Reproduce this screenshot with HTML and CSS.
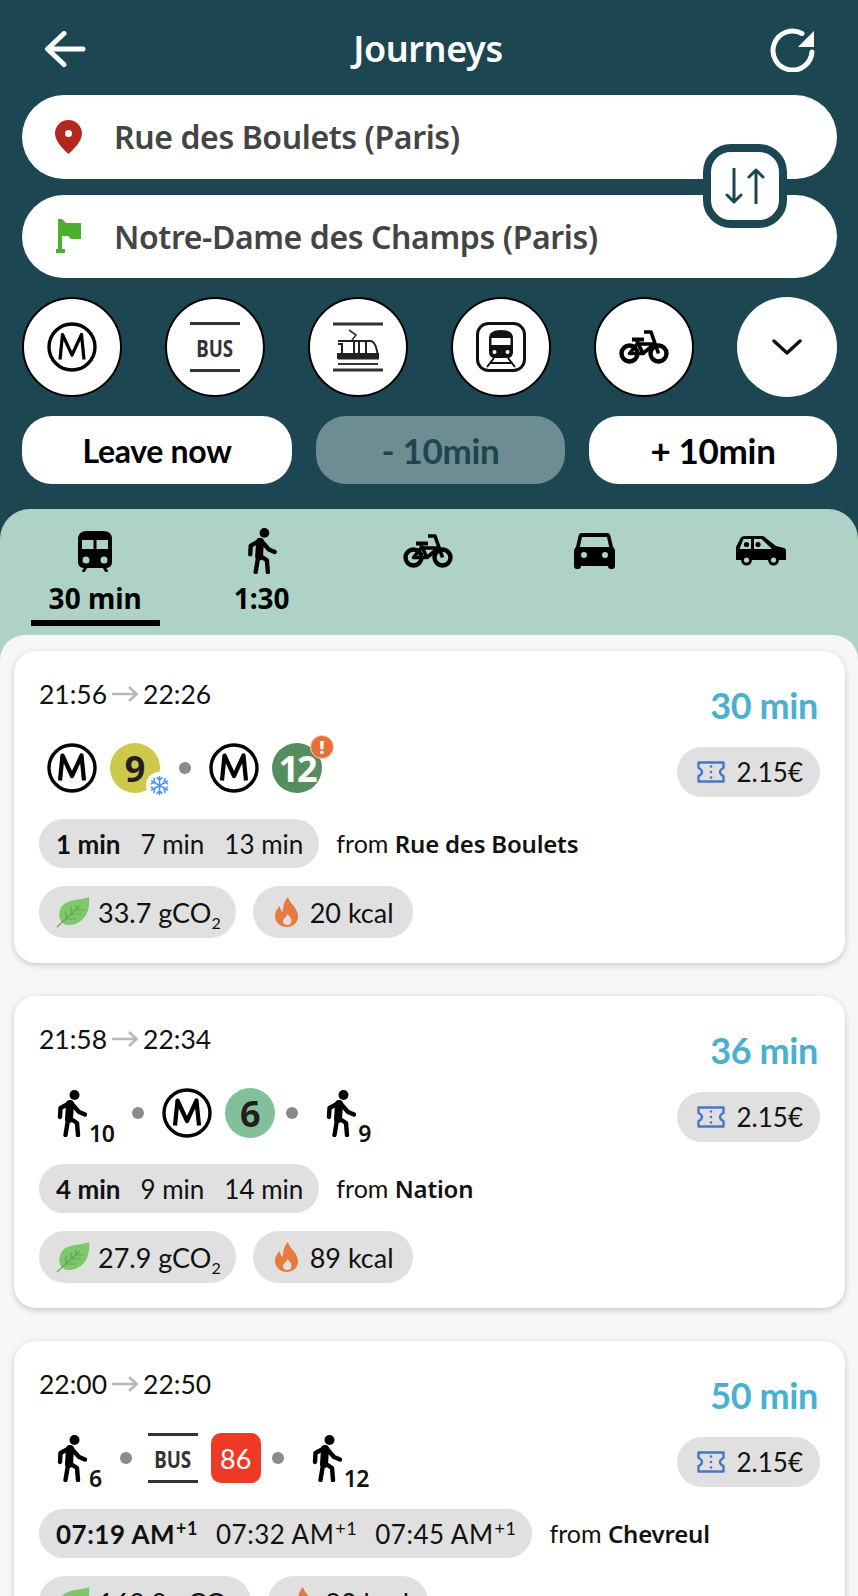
FILE: index.html
```html
<!DOCTYPE html>
<html lang="en">
<head>
  <meta charset="UTF-8" />
  <title>Journeys</title>
  <link rel="stylesheet" href="styles.css">
</head>
<body>

<svg class="icon-defs" xmlns="http://www.w3.org/2000/svg">
  <symbol id="i-metro" viewBox="0 0 50 50">
    <circle cx="25" cy="25" r="23" fill="none" stroke="#000" stroke-width="3.4"/>
    <path d="M13 37.5 15.5 12.5 25 33 34.5 12.5 37 37.5" fill="none" stroke="#000" stroke-linejoin="round"/>
  </symbol>
  <symbol id="i-tram" viewBox="0 0 50 50">
    <path d="M0 2H50M0 48H50" stroke="#333" stroke-width="3" fill="none"/>
    <path d="M16 8 23 13 19 18" stroke="#333" stroke-width="1.6" fill="none"/>
    <path d="M5 19H37C41 19 44 25 45 36H5V32H9V22H5" fill="none" stroke="#222" stroke-width="2"/>
    <path d="M5 31H46V37.5H5Z" fill="#222"/>
    <path d="M21 19V37M26 19V37M33 19V37" stroke="#222" stroke-width="2" fill="none"/>
    <path d="M5 42H45" stroke="#333" stroke-width="2" fill="none"/>
  </symbol>
  <symbol id="i-rail" viewBox="0 0 50 50">
    <rect x="1.5" y="1.5" width="47" height="47" rx="11" fill="none" stroke="#111" stroke-width="3"/>
    <path d="M25 8C17 8 13 11 13 16V30C13 33 15 36 18 36H32C35 36 37 33 37 30V16C37 11 33 8 25 8Z" fill="#111"/>
    <path d="M15.5 16H34.5V23H15.5Z" fill="#fff"/>
    <circle cx="18.5" cy="30" r="2" fill="#fff"/>
    <circle cx="31.5" cy="30" r="2" fill="#fff"/>
    <path d="M18 36 11 45M32 36 39 45M15 41H35" stroke="#111" stroke-width="2" fill="none"/>
  </symbol>
  <symbol id="i-bike" viewBox="0 0 50 34">
    <circle cx="10.5" cy="23.5" r="8" fill="none" stroke="#000" stroke-width="4.4"/>
    <circle cx="39.5" cy="23.5" r="8" fill="none" stroke="#000" stroke-width="4.4"/>
    <path d="M10.5 23.5H24L35.5 14H18ZM17.5 10 24 23.5M39.5 23.5 32 2H25" fill="none" stroke="#000" stroke-width="3.6" stroke-linejoin="round"/>
    <path d="M13 9.5H25" stroke="#000" stroke-width="4" fill="none"/>
  </symbol>
  <symbol id="i-train" viewBox="0 0 34 41">
    <path fill-rule="evenodd" d="M9 0H25C31 0 34 3 34 8V31C34 34 32 37 28 37H6C2 37 0 34 0 31V8C0 3 3 0 9 0ZM4 9V18H15.5V9ZM18.5 9V18H30V9ZM8 25.5A3.5 3.5 0 1 0 8 32.5 3.5 3.5 0 1 0 8 25.5ZM26 25.5A3.5 3.5 0 1 0 26 32.5 3.5 3.5 0 1 0 26 25.5Z"/>
    <path d="M8 36 5 41M26 36 29 41" stroke="#000" stroke-width="3" fill="none"/>
  </symbol>
  <symbol id="i-walk" viewBox="0 0 30 47">
    <circle cx="17.5" cy="5" r="5"/>
    <path d="M13 14 12 29" stroke="#000" stroke-width="8" stroke-linecap="round" fill="none"/>
    <path d="M11 14 3.5 18 3 27M15 14 22 22 28 24.5M11 30 8.5 45M14 29 20 33 21 45" stroke="#000" stroke-width="4.4" stroke-linecap="round" stroke-linejoin="round" fill="none"/>
  </symbol>
  <symbol id="i-car" viewBox="0 0 41 36">
    <path fill-rule="evenodd" d="M8 0H33C35 0 36 1 36.5 3L39 14C40 15 41 16 41 18V33C41 35 40 36 38 36H37C35 36 34 35 34 33H7C7 35 6 36 4 36H3C1 36 0 35 0 33V18C0 16 1 15 2 14L4.5 3C5 1 6 0 8 0ZM8 4 5.8 14H35.2L33 4ZM10 19A3 3 0 1 0 10 25 3 3 0 1 0 10 19ZM31 19A3 3 0 1 0 31 25 3 3 0 1 0 31 19Z"/>
  </symbol>
  <symbol id="i-carpool" viewBox="0 0 50 30">
    <path d="M9 0H26C28 0 29 1 31 3L40 10 48 12C49.5 12.5 50 13.5 50 15V24H0V11L4 3C5 1 6.5 0 9 0Z"/>
    <path d="M7.5 3H15V13H3.5ZM18 3H25.5L36 13H18Z" fill="#aed3c6"/>
    <circle cx="10.5" cy="8.5" r="2.6"/>
    <circle cx="22" cy="8.5" r="2.6"/>
    <circle cx="10.5" cy="24" r="5.5" fill="#000"/>
    <circle cx="37.5" cy="24" r="5.5" fill="#000"/>
    <circle cx="10.5" cy="24" r="2.6" fill="#aed3c6"/>
    <circle cx="37.5" cy="24" r="2.6" fill="#aed3c6"/>
  </symbol>
  <symbol id="i-leaf" viewBox="0 0 34 32">
    <path d="M33 1C35 18 25 30 11 29 2 27 1 15 7 9 13 3 26 4 33 1Z" fill="#7ec76b"/>
    <path d="M1 31 24 10M10 23V15M15 18V11M20 14V9M10 23H20M15 18H25M20 14H28" stroke="#62a853" stroke-width="1.2" fill="none"/>
  </symbol>
  <symbol id="i-flame" viewBox="0 0 24 30">
    <path fill-rule="evenodd" fill="#e57b40" d="M13 0C14 6 22 10 23 18 24 25 18 30 12 30 5 30 0 25 0 19 0 14 3 11 5 9 5 12 6 14 8 15 8 9 9 4 13 0ZM12.5 17C12 20 8 21 8 24.5 8 27 10 28 12 28 15 28 16.5 26 16.5 23.5 16.5 21 14 19 12.5 17Z"/>
  </symbol>
  <symbol id="i-ticket" viewBox="0 0 28 22">
    <path d="M1.5 1.5H26.5V7C24 8 23 9.5 23 11S24 14 26.5 15V20.5H1.5V15C4 14 5 12.5 5 11S4 8 1.5 7Z" fill="none" stroke="#4a74c9" stroke-width="2.4" stroke-linejoin="round"/>
    <circle cx="14" cy="5.5" r="1.3" fill="#4a74c9"/>
    <circle cx="14" cy="11" r="1.3" fill="#4a74c9"/>
    <circle cx="14" cy="16.5" r="1.3" fill="#4a74c9"/>
  </symbol>
  <symbol id="i-snow" viewBox="0 0 22 22">
    <path d="M11 1V21M2.3 6 19.7 16M2.3 16 19.7 6M8 2.5 11 5.5 14 2.5M8 19.5 11 16.5 14 19.5M2 9.5 6 7 5 3M20 9.5 16 7 17 3M2 12.5 6 15 5 19M20 12.5 16 15 17 19" fill="none" stroke="#4a94f2" stroke-width="1.6"/>
  </symbol>
  <symbol id="i-arrow" viewBox="0 0 26 16">
    <path d="M0 8H24M17 1 24.5 8 17 15" fill="none" stroke="#b8b8b8" stroke-width="2.6"/>
  </symbol>
</svg>

<div class="app">
  <header class="header">
    <div class="topbar">
      <svg class="back-icon" viewBox="0 0 42 36"><path d="M39 18H4M20 2.5 3.5 18 20 33.5" fill="none" stroke="#fff" stroke-width="5" stroke-linecap="round" stroke-linejoin="round"/></svg>
      <h1 class="title">Journeys</h1>
      <svg class="refresh-icon" viewBox="0 0 46 46"><path d="M32 7.5A19.5 19.5 0 1 0 42 26" fill="none" stroke="#fff" stroke-width="5" stroke-linecap="round"/><path d="M44 5V21H28Z" fill="#fff"/></svg>
    </div>

    <div class="fields">
      <div class="field">
        <svg class="field-icon" viewBox="0 0 27 34"><path fill-rule="evenodd" fill="#b3281e" d="M13.5 0C21 0 27 6 27 13.5 27 21 19 29 13.5 34 8 29 0 21 0 13.5 0 6 6 0 13.5 0ZM13.5 10A3.5 3.5 0 1 0 13.5 17 3.5 3.5 0 1 0 13.5 10Z"/></svg>
        <span>Rue des Boulets (Paris)</span>
      </div>
      <div class="field">
        <svg class="field-icon" viewBox="0 0 27 34"><path fill="#4caf2f" d="M3 0H7L11 4H26V20H16L13 17H7V30H10V34H1V30H3Z"/></svg>
        <span>Notre-Dame des Champs (Paris)</span>
      </div>
      <div class="swap">
        <svg viewBox="0 0 40 36"><path d="M9 1V34M2 27 9 34 16 27M31 35V2M24 9 31 2 38 9" fill="none" stroke="#1c4651" stroke-width="3" stroke-linecap="round" stroke-linejoin="round"/></svg>
      </div>
    </div>

    <div class="modes">
      <div class="mode"><svg class="mode-metro"><use href="#i-metro"/></svg></div>
      <div class="mode"><div class="bus-mark"><span>BUS</span></div></div>
      <div class="mode"><svg class="mode-icon"><use href="#i-tram"/></svg></div>
      <div class="mode"><svg class="mode-icon"><use href="#i-rail"/></svg></div>
      <div class="mode"><svg class="mode-bike"><use href="#i-bike"/></svg></div>
      <div class="mode mode-more">
        <svg class="chevron" viewBox="0 0 30 16"><path d="M2 2 15 14 28 2" fill="none" stroke="#111" stroke-width="3.4" stroke-linecap="round" stroke-linejoin="round"/></svg>
      </div>
    </div>

    <div class="time-btns">
      <button class="time-btn">Leave now</button>
      <button class="time-btn is-step is-disabled">- 10min</button>
      <button class="time-btn is-step">+ 10min</button>
    </div>
  </header>

  <section class="sheet">
    <nav class="tabs">
      <div class="tab">
        <div class="tab-icon"><svg class="ic-train"><use href="#i-train"/></svg></div>
        <div class="tab-label">30 min</div>
        <div class="tab-line"></div>
      </div>
      <div class="tab">
        <div class="tab-icon"><svg class="ic-walk"><use href="#i-walk"/></svg></div>
        <div class="tab-label">1:30</div>
      </div>
      <div class="tab">
        <div class="tab-icon"><svg class="ic-bike"><use href="#i-bike"/></svg></div>
      </div>
      <div class="tab">
        <div class="tab-icon"><svg class="ic-car"><use href="#i-car"/></svg></div>
      </div>
      <div class="tab">
        <div class="tab-icon"><svg class="ic-carpool"><use href="#i-carpool"/></svg></div>
      </div>
    </nav>

    <div class="list">
      <article class="card">
        <div class="card-top">
          <div>
            <div class="times">21:56<svg class="time-arrow"><use href="#i-arrow"/></svg>22:26</div>
            <div class="legs">
              <svg class="leg-metro"><use href="#i-metro"/></svg>
              <div class="line line-9">9
                <span class="snow-badge"><svg><use href="#i-snow"/></svg></span>
              </div>
              <span class="dot"></span>
              <svg class="leg-metro"><use href="#i-metro"/></svg>
              <div class="line line-12">12
                <span class="alert-badge">!</span>
              </div>
            </div>
          </div>
          <div class="card-side">
            <div class="duration">30 min</div>
            <div class="pill price"><svg class="ic-ticket"><use href="#i-ticket"/></svg>2.15€</div>
          </div>
        </div>
        <div class="next-row">
          <div class="pill departures"><b>1 min</b><span>7 min</span><span>13 min</span></div>
          <div class="from">from <b>Rue des Boulets</b></div>
        </div>
        <div class="eco-row">
          <div class="pill eco"><svg class="ic-leaf"><use href="#i-leaf"/></svg><span>33.7 gCO<sub>2</sub></span></div>
          <div class="pill burn"><svg class="ic-flame"><use href="#i-flame"/></svg><span>20 kcal</span></div>
        </div>
      </article>

      <article class="card">
        <div class="card-top">
          <div>
            <div class="times">21:58<svg class="time-arrow"><use href="#i-arrow"/></svg>22:34</div>
            <div class="legs">
              <div class="walk"><svg class="leg-walk"><use href="#i-walk"/></svg><span>10</span></div>
              <span class="dot"></span>
              <svg class="leg-metro"><use href="#i-metro"/></svg>
              <div class="line line-6">6</div>
              <span class="dot"></span>
              <div class="walk"><svg class="leg-walk"><use href="#i-walk"/></svg><span>9</span></div>
            </div>
          </div>
          <div class="card-side">
            <div class="duration">36 min</div>
            <div class="pill price"><svg class="ic-ticket"><use href="#i-ticket"/></svg>2.15€</div>
          </div>
        </div>
        <div class="next-row">
          <div class="pill departures"><b>4 min</b><span>9 min</span><span>14 min</span></div>
          <div class="from">from <b>Nation</b></div>
        </div>
        <div class="eco-row">
          <div class="pill eco"><svg class="ic-leaf"><use href="#i-leaf"/></svg><span>27.9 gCO<sub>2</sub></span></div>
          <div class="pill burn"><svg class="ic-flame"><use href="#i-flame"/></svg><span>89 kcal</span></div>
        </div>
      </article>

      <article class="card">
        <div class="card-top">
          <div>
            <div class="times">22:00<svg class="time-arrow"><use href="#i-arrow"/></svg>22:50</div>
            <div class="legs">
              <div class="walk"><svg class="leg-walk"><use href="#i-walk"/></svg><span>6</span></div>
              <span class="dot"></span>
              <div class="bus-mark"><span>BUS</span></div>
              <div class="line line-86">86</div>
              <span class="dot"></span>
              <div class="walk"><svg class="leg-walk"><use href="#i-walk"/></svg><span>12</span></div>
            </div>
          </div>
          <div class="card-side">
            <div class="duration">50 min</div>
            <div class="pill price"><svg class="ic-ticket"><use href="#i-ticket"/></svg>2.15€</div>
          </div>
        </div>
        <div class="next-row">
          <div class="pill departures is-clock"><b>07:19 AM<sup>+1</sup></b><span>07:32 AM<sup>+1</sup></span><span>07:45 AM<sup>+1</sup></span></div>
          <div class="from">from <b>Chevreul</b></div>
        </div>
        <div class="eco-row">
          <div class="pill eco"><svg class="ic-leaf"><use href="#i-leaf"/></svg><span>168.8 gCO<sub>2</sub></span></div>
          <div class="pill burn"><svg class="ic-flame"><use href="#i-flame"/></svg><span>90 kcal</span></div>
        </div>
      </article>
    </div>
  </section>
</div>

</body>
</html>
```

FILE: styles.css
```css
* {
  margin: 0;
  padding: 0;
  box-sizing: border-box;
}
body {
  font-family: 'Lato', 'Noto Sans', sans-serif;
  background: #1c4651;
  color: #111;
}
svg {
  display: block;
  flex-shrink: 0;
}
.icon-defs {
  display: none;
}

.app {
  height: 1596px;
  overflow: hidden;
}

/* header */
.header {
  padding: 0 21px 25px 22px;
}
.topbar {
  height: 95px;
  display: flex;
  align-items: center;
  justify-content: space-between;
  padding: 2px 21px 0 22px;
}
.back-icon {
  width: 42px;
  height: 36px;
}
.title {
  font-family: 'Noto Sans', sans-serif;
  font-size: 36px;
  font-weight: 600;
  letter-spacing: -0.4px;
  color: #fff;
}
.refresh-icon {
  width: 46px;
  height: 46px;
}

.fields {
  position: relative;
  display: flex;
  flex-direction: column;
  gap: 16px;
}
.field {
  height: 83.5px;
  display: flex;
  align-items: center;
  gap: 32px;
  padding-left: 33px;
  background: #fff;
  border-radius: 42px;
  font-family: 'Noto Sans', sans-serif;
  font-size: 32px;
  font-weight: 600;
  letter-spacing: -0.4px;
  color: #444;
}
.field-icon {
  width: 27px;
  height: 34px;
}
.swap {
  position: absolute;
  top: 49px;
  right: 50px;
  width: 84px;
  height: 84px;
  display: flex;
  align-items: center;
  justify-content: center;
  background: #fff;
  border: 8px solid #1c4651;
  border-radius: 28px;
}
.swap svg {
  width: 40px;
  height: 36px;
}

.modes {
  display: flex;
  justify-content: space-between;
  margin-top: 19px;
}
.mode {
  width: 100px;
  height: 100px;
  display: flex;
  align-items: center;
  justify-content: center;
  background: #fff;
  border: 2px solid #000;
  border-radius: 50%;
}
.mode-more {
  border: none;
}
.mode-metro {
  width: 50px;
  height: 50px;
  stroke-width: 3.2;
}
.mode-icon {
  width: 50px;
  height: 50px;
}
.mode-bike {
  width: 50px;
  height: 34px;
}
.chevron {
  width: 30px;
  height: 16px;
}

.bus-mark {
  width: 50px;
  height: 50px;
  display: flex;
  align-items: center;
  justify-content: center;
  border-top: 3px solid #333;
  border-bottom: 3px solid #333;
  font-family: 'Noto Sans', sans-serif;
  font-size: 24px;
  font-weight: 700;
  color: #333;
}
.bus-mark span {
  transform: scaleX(0.78);
}
.dot + .bus-mark {
  margin-left: -2px;
}

.time-btns {
  display: grid;
  grid-template-columns: 270px 249px 248px;
  gap: 24px;
  margin-top: 19px;
}
.time-btn {
  height: 68px;
  background: #fff;
  border: none;
  border-radius: 30px;
  font-family: 'Lato', sans-serif;
  font-size: 32px;
  font-weight: 700;
  letter-spacing: -0.3px;
  color: #000;
}
.time-btn.is-step {
  font-size: 35px;
}
.time-btn.is-disabled {
  background: #6e8d92;
  color: #1c4651;
}

/* sheet + tabs */
.sheet {
  background: #aed3c6;
  border-radius: 30px 30px 0 0;
}
.tabs {
  height: 126px;
  display: flex;
  padding: 16px 14px 0 12px;
}
.tab {
  flex: 1;
  display: flex;
  flex-direction: column;
  align-items: center;
}
.tab-icon {
  height: 52px;
  display: flex;
  align-items: center;
  justify-content: center;
}
.tab-label {
  margin-top: 5px;
  font-family: 'Noto Sans', sans-serif;
  font-size: 28px;
  font-weight: 700;
  line-height: 32px;
  color: #000;
}
.tab-line {
  width: 129px;
  height: 6px;
  margin-top: 6px;
  background: #000;
}
.ic-train {
  width: 34px;
  height: 41px;
}
.ic-walk {
  width: 30px;
  height: 46px;
}
.ic-bike {
  width: 50px;
  height: 34px;
}
.ic-car {
  width: 41px;
  height: 36px;
}
.ic-carpool {
  width: 50px;
  height: 30px;
}

/* journey list */
.list {
  display: flex;
  flex-direction: column;
  gap: 33px;
  padding: 16px 13px 40px 14px;
  background: #f7f7f7;
  border-radius: 25px 25px 0 0;
}
.card {
  padding: 28px 25px 25px;
  background: #fff;
  border-radius: 22px;
  box-shadow: 0 2px 6px rgba(0,0,0,0.2);
}
.card-top {
  display: flex;
  justify-content: space-between;
}
.times {
  display: flex;
  align-items: center;
  height: 30px;
  font-size: 26.5px;
  color: #111;
}
.time-arrow {
  width: 26px;
  height: 16px;
  margin: 0 5px 0 5px;
}
.legs {
  display: flex;
  align-items: center;
  height: 50px;
  margin-top: 34px;
  padding-left: 8px;
}
.leg-metro {
  width: 50px;
  height: 50px;
  stroke-width: 4.2;
}
.line {
  position: relative;
  width: 50px;
  height: 50px;
  margin-left: 13px;
  display: flex;
  align-items: center;
  justify-content: center;
  border-radius: 50%;
  font-family: 'Noto Sans', sans-serif;
  font-size: 36px;
  font-weight: 700;
  color: #231f20;
}
.line-9 {
  background: #cdc94a;
}
.line-12 {
  background: #558d5f;
  color: #fff;
  letter-spacing: -2px;
}
.line-6 {
  background: #82c09a;
}
.line-86 {
  background: #ee3a24;
  border-radius: 10px;
  font-family: 'Lato', sans-serif;
  font-size: 27px;
  font-weight: 400;
  color: #fff;
}
.snow-badge {
  position: absolute;
  right: -12px;
  bottom: -5px;
  width: 26px;
  height: 26px;
  display: flex;
  align-items: center;
  justify-content: center;
  background: #fff;
  border-radius: 50%;
}
.snow-badge svg {
  width: 21px;
  height: 21px;
}
.alert-badge {
  position: absolute;
  top: -8px;
  right: -12px;
  width: 24px;
  height: 24px;
  display: flex;
  align-items: center;
  justify-content: center;
  background: #e5703a;
  border: 1px solid #f8d3c0;
  border-radius: 50%;
  font-size: 17px;
  font-weight: 900;
  letter-spacing: 0;
  color: #fff;
}
.dot {
  width: 12px;
  height: 12px;
  margin: 0 18px;
  background: #8a8a8a;
  border-radius: 50%;
}
.line + .dot {
  margin-left: 11px;
}
.line-9 + .dot {
  margin-left: 19px;
}
.walk {
  height: 50px;
  display: flex;
  align-items: flex-end;
  margin-left: 10px;
  font-family: 'Noto Sans', sans-serif;
  font-size: 23px;
  font-weight: 600;
  color: #111;
}
.leg-walk {
  width: 30px;
  height: 47px;
  margin: 0 2px 1px 0;
}
.walk span {
  line-height: 18px;
  margin-bottom: -4px;
  letter-spacing: -0.5px;
}

.card-side {
  display: flex;
  flex-direction: column;
  align-items: flex-end;
}
.duration {
  height: 40px;
  margin: 6px 2px 0 0;
  font-size: 36px;
  font-weight: 700;
  line-height: 40px;
  letter-spacing: -0.4px;
  color: #4ab0d0;
}
.pill {
  display: flex;
  align-items: center;
  background: #e0e0e0;
  font-size: 26px;
  color: #111;
}
.price {
  height: 50px;
  margin-top: 22px;
  padding: 0 17px 0 20px;
  border-radius: 25px;
}
.ic-ticket {
  width: 28px;
  height: 22px;
  margin-right: 12px;
}

.next-row {
  display: flex;
  align-items: center;
  gap: 17px;
  margin-top: 22px;
}
.departures {
  height: 49px;
  gap: 20px;
  padding: 0 16px 0 17px;
  border-radius: 25px;
  white-space: nowrap;
}
.departures b {
  font-weight: 700;
}
.departures.is-clock {
  gap: 18px;
  letter-spacing: 0.5px;
}
.departures sup {
  margin-left: 1px;
  font-size: 18px;
  line-height: 0;
  vertical-align: 9px;
}
.from {
  font-size: 25px;
  white-space: nowrap;
}
.from b {
  font-family: 'Noto Sans', sans-serif;
  font-size: 24px;
  font-weight: 600;
  letter-spacing: -0.2px;
}

.eco-row {
  display: flex;
  gap: 17px;
  margin-top: 18px;
}
.eco, .burn {
  height: 52px;
  border-radius: 26px;
  font-size: 27px;
  white-space: nowrap;
}
.eco {
  padding: 0 15px 0 17px;
}
.burn {
  padding: 0 19px 0 22px;
}
.eco sub {
  font-size: 16px;
  line-height: 0;
}
.ic-leaf {
  width: 34px;
  height: 32px;
  margin-right: 8px;
}
.ic-flame {
  width: 24px;
  height: 30px;
  margin-right: 11px;
}
```
